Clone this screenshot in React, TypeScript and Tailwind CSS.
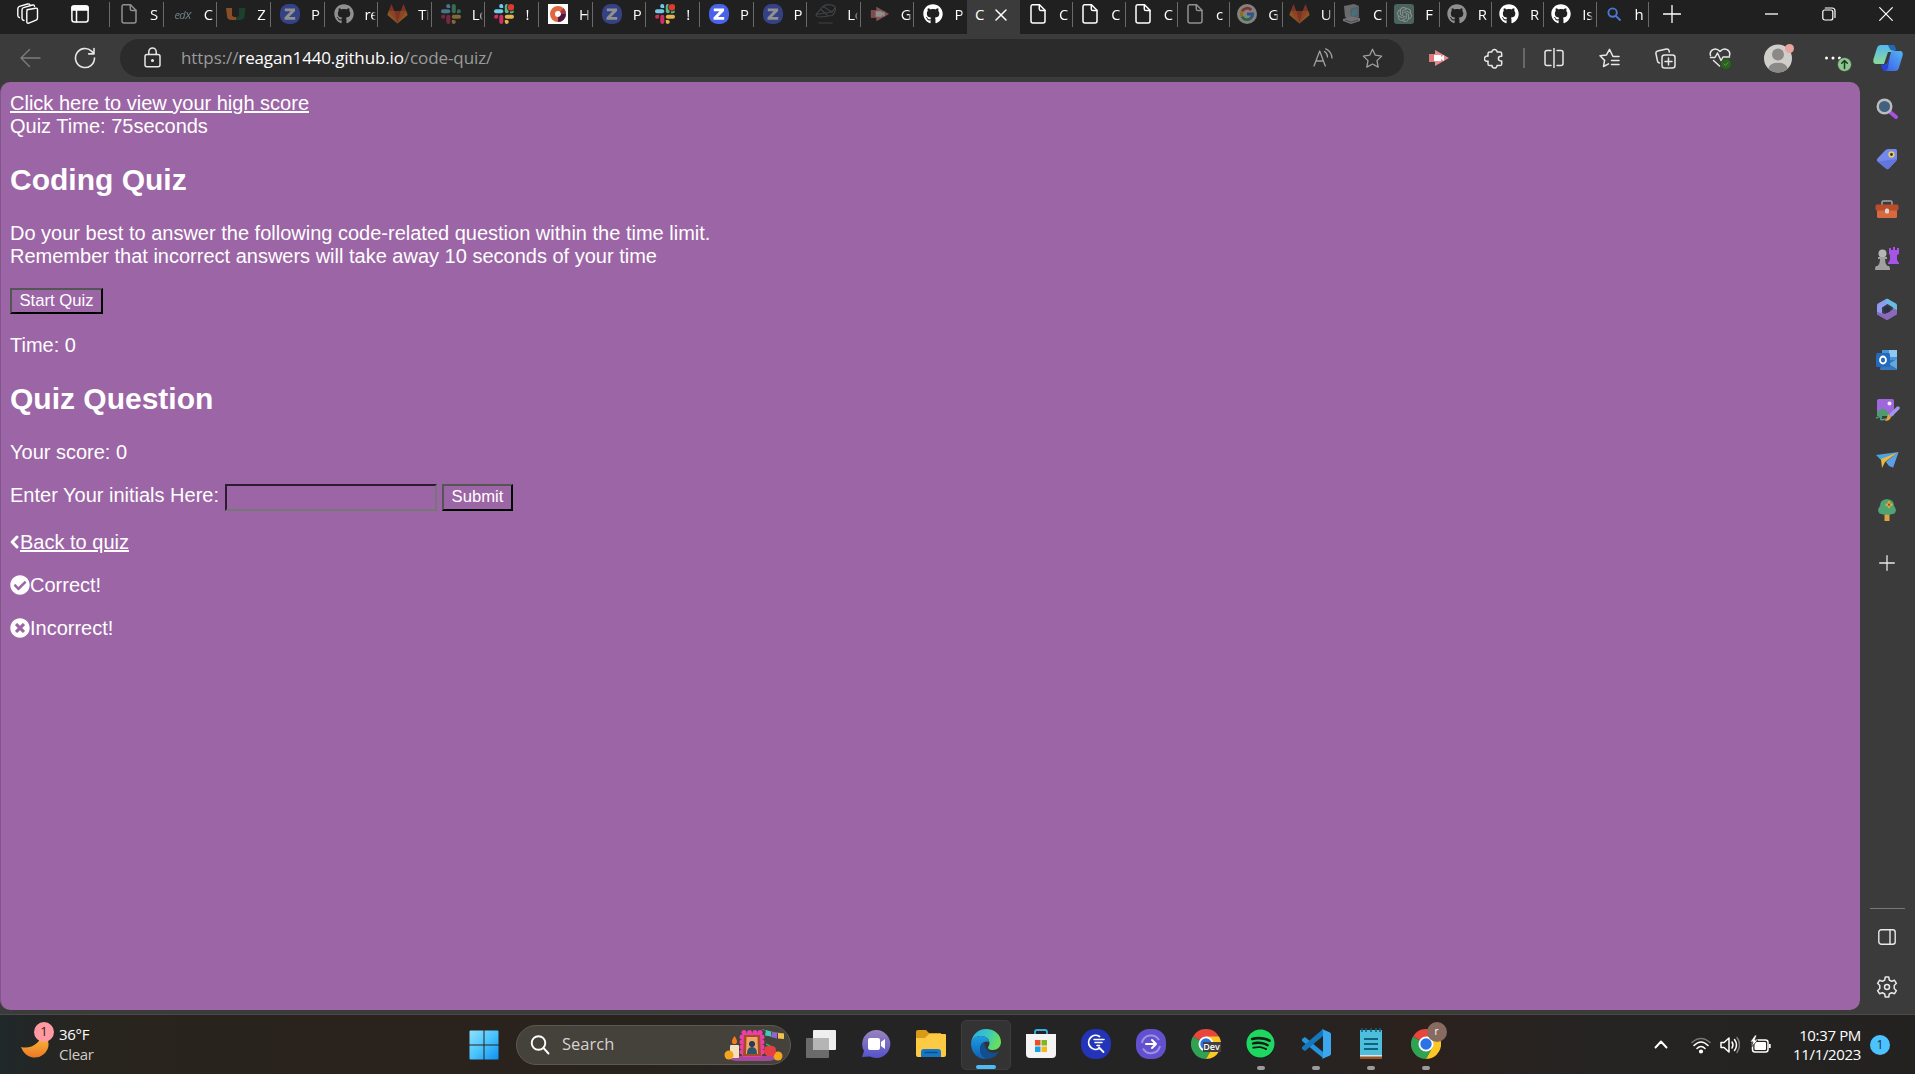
import React from "react";
import { FaCheckCircle, FaGithub, FaSpotify, FaTimesCircle } from "react-icons/fa";
import { SiOpenai } from "react-icons/si";

const line = { fill: "none", stroke: "currentColor", strokeLinecap: "round", strokeLinejoin: "round" } as const;

function FileIcon() {
  return (
    <svg width="20" height="22" viewBox="0 0 20 22" {...line} strokeWidth="1.5">
      <path d="M4.5 1.8H11.5L17 7.3V18a2 2 0 0 1-2 2H5a2 2 0 0 1-2-2V3.4a1.6 1.6 0 0 1 1.5-1.6Z" />
      <path d="M11.3 2v4a1.6 1.6 0 0 0 1.6 1.6h4" />
    </svg>
  );
}

function ZIcon() {
  return (
    <svg width="20" height="20" viewBox="0 0 20 20">
      <rect width="20" height="20" rx="8.5" fill="#4a62ea" />
      <path d="M4.8 4.500H15V7L9 13H15.200V15.800H4.500V13.400L10.500 7.300H4.800Z" fill="#fff" />
    </svg>
  );
}

function SlackIcon({ dot = false }: { dot?: boolean }) {
  return (
    <svg width="20" height="20" viewBox="0 0 20 20">
      <g fill="#6fcbee"><rect x="0" y="5.3" width="9.2" height="4" rx="2" /><path d="M9.2 4.1H7.3a2 2 0 1 1 1.9-2Z" /></g>
      <g fill="#51b98a"><rect x="10.8" y="0" width="4" height="9.2" rx="2" /><path d="M15.9 9.2V7.3a2 2 0 1 1 2 1.9Z" /></g>
      <g fill="#e6b34a"><rect x="10.8" y="10.8" width="9.2" height="4" rx="2" /><path d="M10.8 15.9h1.9a2 2 0 1 1-1.9 2Z" /></g>
      <g fill="#d02f62"><rect x="5.3" y="10.8" width="4" height="9.2" rx="2" /><path d="M4.1 10.8v1.9a2 2 0 1 1-2-1.9Z" /></g>
      {dot && <circle cx="17" cy="3.3" r="3.8" fill="#df3a2c" stroke="#202020" strokeWidth=".8" />}
    </svg>
  );
}

function GoogleIcon() {
  return (
    <svg width="20" height="20" viewBox="0 0 20 20">
      <circle cx="10" cy="10" r="10" fill="#e4e4e4" />
      <g fill="none" strokeWidth="2.8">
        <path d="M14.2 6A5.7 5.7 0 0 0 5 7.3" stroke="#ea4335" />
        <path d="M5 7.3a5.7 5.7 0 0 0 0 5.4" stroke="#fbbc05" />
        <path d="M5 12.7a5.7 5.7 0 0 0 8.6 1.7" stroke="#34a853" />
        <path d="M10 10h5.7a5.7 5.7 0 0 1-2.1 4.4" stroke="#4285f4" />
      </g>
    </svg>
  );
}

function ArrowCam() {
  return (
    <svg width="22" height="18" viewBox="0 0 22 18">
      <path d="M1 5h6V1l14 8-14 8v-4H1Z" fill="#e98a8c" />
      <path d="M6 6h7v2l3-2v6l-3-2v2H6Z" fill="#fff" />
      <path d="M1 5h5v8H1Z" fill="#d9797c" />
    </svg>
  );
}

function GitlabFox() {
  return (
    <svg className="shrink-0" width="21" height="20" viewBox="0 0 21 20">
      <path d="M4.500 0 1.700 7h5.600Zm12 0 2.800 7h-5.600Z" fill="#d9452a" />
      <path d="M1.700 7 .3 11l10.200 8.500L20.700 11 19.300 7Z" fill="#f98a2c" />
      <path d="M1.700 7h5.600l3.200 12.500Zm17.600 0h-5.600l-3.200 12.500Z" fill="#f26a2b" />
      <path d="M7.300 7h6.400l-3.200 12.500Z" fill="#d9452a" />
    </svg>
  );
}

function Statue() {
  return (
    <svg width="20" height="20" viewBox="0 0 20 20">
      <path d="M2 2 12 0l5 2v11l-8 3-6-3Z" fill="#b1b3b8" />
      <path d="M8 5 17 2v10l-8 3Z" fill="#8f9dab" />
      <path d="m10 6.500 5-1.700v6L10 12.500Z" fill="#65c2de" />
      <path d="m1 15 8-2.500 9 1.500v3l-9 3-8-3Z" fill="#c4c4c8" />
      <path d="m3 16 6 2 7-2" stroke="#77777b" fill="none" />
    </svg>
  );
}

type TabData = { icon: React.ReactNode; text: string; dim?: boolean };

const leftTabs: TabData[] = [
  { icon: <FileIcon />, text: "S", dim: true },
  { icon: <span className="font-['Open_Sans'] text-[11px] italic leading-none tracking-[-0.6px] text-[#b6dce4]">ed<b className="text-[13px] font-medium">x</b></span>, text: "C", dim: true },
  {
    icon: (
      <svg width="20" height="14" viewBox="0 0 20 14">
        <path d="M0 1h6v7q0 2 4 2v3H6Q1 13 1 9Z" fill="#f47b2c" />
        <path d="M19.500 1H13v7q0 2-3 2v3h4q4.500 0 4.500-4Z" fill="#17603a" />
      </svg>
    ),
    text: "Z",
    dim: true,
  },
  { icon: <ZIcon />, text: "P", dim: true },
  { icon: <FaGithub size={20} />, text: "re", dim: true },
  { icon: <GitlabFox />, text: "Ti", dim: true },
  { icon: <SlackIcon />, text: "Lo", dim: true },
  { icon: <SlackIcon dot />, text: "!" },
  {
    icon: (
      <svg width="20" height="20" viewBox="0 0 20 20">
        <rect width="20" height="20" fill="#fff" />
        <circle cx="10" cy="10" r="5.5" fill="none" stroke="#e0673f" strokeWidth="5" />
        <path d="M15.5 10a5.5 5.5 0 0 1-5.5 5.5" fill="none" stroke="#4b1942" strokeWidth="5" />
        <path d="M13.9 6.1A5.5 5.5 0 0 1 15.5 10" fill="none" stroke="#a23a45" strokeWidth="5" />
      </svg>
    ),
    text: "H",
  },
  { icon: <ZIcon />, text: "P", dim: true },
  { icon: <SlackIcon dot />, text: "!" },
  { icon: <ZIcon />, text: "P" },
  { icon: <ZIcon />, text: "P", dim: true },
  {
    icon: (
      <svg className="shrink-0" width="22" height="20" viewBox="0 0 22 20" fill="none" stroke="#5f676e" strokeWidth="1.1">
        <path d="M1 10.500 8 2.500Q10 .5 14 .6q6 .4 6.500 3.400 0 5-3.500 7.500L6 13Q1 13 1 10.500Zm0 0 15.500-2.500M8 2.500l9 5.500 3-4M6 5.500 13 12M3.500 19h14" />
      </svg>
    ),
    text: "Lo",
    dim: true,
  },
  { icon: <ArrowCam />, text: "G", dim: true },
  { icon: <FaGithub size={20} />, text: "P" },
];

const rightTabs: TabData[] = [
  { icon: <FileIcon />, text: "C" },
  { icon: <FileIcon />, text: "C" },
  { icon: <FileIcon />, text: "C" },
  { icon: <FileIcon />, text: "c", dim: true },
  { icon: <GoogleIcon />, text: "G", dim: true },
  { icon: <GitlabFox />, text: "U", dim: true },
  { icon: <Statue />, text: "C", dim: true },
  {
    icon: <span className="flex size-5 items-center justify-center rounded-[3px] bg-[#75a99c]"><SiOpenai size={15} /></span>,
    text: "F",
    dim: true,
  },
  { icon: <FaGithub size={20} />, text: "R", dim: true },
  { icon: <FaGithub size={20} />, text: "R" },
  { icon: <FaGithub size={20} />, text: "Is" },
  {
    icon: (
      <svg width="20" height="20" viewBox="0 0 20 20" {...line} stroke="#4a78d6" strokeWidth="1.9">
        <circle cx="8.6" cy="8.6" r="4.2" /><path d="m11.8 11.8 4.2 4.2" />
      </svg>
    ),
    text: "h",
  },
];

function Tab({ tab, divider, iconClass }: { tab: TabData; divider: boolean; iconClass: string }) {
  return (
    <div className="flex h-7 flex-1 items-center">
      <div className={divider ? "mt-px h-[25px] w-px bg-[#6a6a6a]" : "w-px"} />
      <div className={tab.dim ? `${iconClass} opacity-50` : iconClass}>{tab.icon}</div>
      <div className="w-[11px] overflow-hidden whitespace-nowrap text-[15px] leading-5 tracking-[-0.3px] [mask-image:linear-gradient(to_right,black_65%,transparent)]">{tab.text}</div>
    </div>
  );
}

function TabStrip() {
  return (
    <div className="flex h-[34px] shrink-0 bg-[#202020]">
      <div className="flex h-7 w-[109px] shrink-0 items-center">
        <svg className="ml-4" width="23" height="22" viewBox="0 0 23 22" {...line} strokeWidth="1.4">
          <path d="M11 6.800 19.500 5.200q2-.4 2 1.400v8.500q0 1.500-1.400 2l-7.300 3q-2 .6-2-1.400V8.500q0-1.400 1.400-1.800" />
          <path d="M8 17.5q-2-.3-2-2V7q0-1.8 1.6-2.3L16.5 2q1.8-.4 2 1.3" />
          <path d="M3.4 14.5q-1.6-.3-1.6-2V6q0-2 1.6-2.6L11.6 1q1.6-.4 2.3.6" />
        </svg>
        <svg className="ml-8" width="18" height="18" viewBox="0 0 18 18" {...line} strokeWidth="1.5">
          <rect x=".9" y=".9" width="16.2" height="16.2" rx="2.5" />
          <path d="M1 2.5Q1 1 3 1h12q2 0 2 1.500V5H1Z" fill="currentColor" /><path d="M5.500 5v12" />
        </svg>
      </div>
      <div className="flex w-[858px] shrink-0">
        {leftTabs.map((t, i) => <Tab key={i} tab={t} divider iconClass="ml-[9px] mr-[11px] flex w-5 shrink-0 justify-center" />)}
      </div>
      <div className="flex w-[53px] shrink-0 items-center bg-[#3b3b3b] pb-1.5">
        <span className="ml-2 w-[10px] overflow-hidden text-[15px] leading-5">C</span>
        <svg className="ml-[10px] mt-px" width="12" height="12" viewBox="0 0 12 12" {...line} strokeWidth="1.5"><path d="m1 1 10 10M11 1 1 11" /></svg>
      </div>
      <div className="flex w-[628px] shrink-0">
        {rightTabs.map((t, i) => <Tab key={i} tab={t} divider={i > 0} iconClass="ml-[7px] mr-[11px] flex w-5 shrink-0 justify-center" />)}
      </div>
      <div className="flex h-7 flex-1 items-center">
        <div className="mt-px h-[25px] w-px bg-[#6a6a6a]" />
        <svg className="ml-[14px]" width="18" height="18" viewBox="0 0 18 18" {...line} strokeWidth="1.3"><path d="M9 .5v17M.5 9h17" /></svg>
        <svg className="ml-[84px]" width="13" height="2" viewBox="0 0 13 2"><path d="M0 1h13" stroke="#fff" strokeWidth="1.300" /></svg>
        <svg className="ml-[44px]" width="14" height="14" viewBox="0 0 14 14" {...line} strokeWidth="1.2">
          <rect x=".8" y="3" width="10" height="10" rx="2" /><path d="M3.300 1h6.700a3 3 0 0 1 3 3v6.500" />
        </svg>
        <svg className="ml-[43px]" width="14" height="14" viewBox="0 0 14 14" {...line} strokeWidth="1.200"><path d="m.7.7 12.600 12.600M13.300.7.7 13.300" /></svg>
      </div>
    </div>
  );
}

function Toolbar() {
  return (
    <div className="flex h-12 shrink-0 items-center bg-[#3b3b3b] text-[#e6e6e6]">
      <div className="flex w-[60px] justify-center text-[#7d7d7d]">
        <svg width="21" height="20" viewBox="0 0 21 20" {...line} strokeWidth="1.400"><path d="M20 10H1M9.500 1.500 1 10l8.500 8.500" /></svg>
      </div>
      <div className="flex w-[50px] justify-center">
        <svg width="22" height="22" viewBox="0 0 22 22" {...line} strokeWidth="1.600"><path d="M20.500 11a9.500 9.500 0 1 1-3-6.900L20 6.700M20 1.500v5.400h-5.300" /></svg>
      </div>
      <div className="ml-2.5 flex h-[38px] w-[1284px] items-center rounded-full bg-[#2b2b2b]">
        <svg className="mb-px ml-6" width="17" height="21" viewBox="0 0 17 21" {...line} strokeWidth="1.500">
          <rect x="1" y="7.500" width="15" height="12.300" rx="2" /><path d="M4.800 7.500V4.700a3.700 3.700 0 0 1 7.400 0v2.800" /><circle cx="8.500" cy="13.500" r=".8" fill="currentColor" />
        </svg>
        <div className="ml-[20px] whitespace-nowrap text-[17px] tracking-[-0.08px] text-[#9b9b9b]">
          https://<span className="tracking-[-0.14px] text-white">reagan1440.github.io</span>/code-quiz/
        </div>
        <div className="ml-auto flex items-center text-[#a0a0a0]">
          <svg width="20" height="20" viewBox="0 0 20 20" {...line} strokeWidth="1.300">
            <path d="m1 18 5.700-15L12.300 18M3 13h7.500M11.500 3.500q3 2 3 5.500M12.800.8q6 3 6.200 9.200" />
          </svg>
          <svg className="ml-[29px] mr-[21px]" width="21" height="21" viewBox="0 0 21 21" {...line} strokeWidth="1.300">
            <path d="m10.500 1.300 2.800 5.900 6.400.9-4.700 4.500 1.200 6.500-5.700-3.100-5.700 3.100L6 12.600 1.300 8.100l6.400-.9Z" />
          </svg>
        </div>
      </div>
      <div className="ml-[7px] flex w-[56px] justify-center"><ArrowCam /></div>
      <div className="flex w-[54px] justify-center">
        <svg width="20" height="21" viewBox="0 0 20 21" {...line} strokeWidth="1.500">
          <path d="M5.700 4h2.200a2.600 2.600 0 1 1 5.200 0H16q1.700 0 1.700 1.700v2.600h-1a2.300 2.300 0 0 0 0 4.600h1v3q0 1.700-1.700 1.700h-3a2.500 2.500 0 0 1-5 0H5.700Q4 17.600 4 15.900v-2.800a2.600 2.600 0 1 1 0-4.800V5.700Q4 4 5.700 4" />
        </svg>
      </div>
      <div className="flex w-1.5 justify-center"><div className="h-5 w-[1.500px] bg-[#686868]" /></div>
      <div className="flex w-[54px] justify-center">
        <svg width="20" height="20" viewBox="0 0 20 20" {...line} strokeWidth="1.500">
          <path d="M7 2.500H3q-2 0-2 2v11q0 2 2 2h4M13 2.500h4q2 0 2 2v11q0 2-2 2h-4M10 .5v19" />
        </svg>
      </div>
      <div className="flex w-[57px] justify-center">
        <svg width="21" height="20" viewBox="0 0 21 20" {...line} strokeWidth="1.500">
          <path d="M20 8.500h-6L10.500 1.300l-3 5.600L1 7.800l4.600 4.600L4.500 18.500l5-2.600M12.500 12.500H20M12.500 16.500H20" />
        </svg>
      </div>
      <div className="flex w-[54px] justify-center">
        <svg width="21" height="21" viewBox="0 0 21 21" {...line} strokeWidth="1.500">
          <rect x="7" y="7" width="13" height="13" rx="2.500" /><path d="M13.500 10v7M10 13.500h7M4.500 15q-1.800-.3-2-1.800L.9 5.500q-.2-2 1.700-2.400L11.500 1q2-.3 2.500 1.500l.3 1.500" />
        </svg>
      </div>
      <div className="flex w-[56px] justify-center">
        <svg width="22" height="22" viewBox="0 0 22 22" {...line} strokeWidth="1.500">
          <path d="M1.500 8.500C0 3 6.500-.5 11 4.500 15.500-.5 22 3 20.500 8.500M1.500 10.500H6L8.500 6l3.500 7.500 2-3.500h6.500M4.500 13.500 10.500 19" />
          <circle cx="17" cy="17" r="5" fill="#28651b" stroke="none" /><path d="m15 17 1.500 1.500 2.500-3" stroke="#5b9449" strokeWidth="1" />
        </svg>
      </div>
      <div className="flex w-[60px] justify-center">
        <svg className="ml-0.5" width="32" height="30" viewBox="0 0 32 30">
          <circle cx="15" cy="15.500" r="14" fill="#d0cecb" /><circle cx="15" cy="11.500" r="6" fill="#8b8987" />
          <path d="M5.300 25.500q1.500-5.800 9.700-5.800t9.700 5.800a14 14 0 0 1-19.400 0Z" fill="#8b8987" />
          <circle cx="26.500" cy="5.500" r="4.500" fill="#e8a5a0" />
        </svg>
      </div>
      <div className="flex w-[52px] justify-center">
        <svg className="ml-2 mt-1.5" width="28" height="22" viewBox="0 0 28 22">
          <g fill="#fff"><circle cx="2.500" cy="8" r="1.500" /><circle cx="9" cy="8" r="1.500" /><circle cx="15.500" cy="8" r="1.500" /></g>
          <circle cx="20.500" cy="14.500" r="7" fill="#8ec68f" stroke="#3b3b3b" strokeWidth=".8" /><path d="M20.500 18.500v-8m-2.800 2.800 2.800-2.800 2.800 2.800" {...line} stroke="#1d3b20" strokeWidth="1.500" />
        </svg>
      </div>
      <div className="flex w-[55px] justify-center">
        <svg width="30" height="28" viewBox="0 0 30 28">
          <defs>
            <linearGradient id="cpl" x1="0" y1="0" x2="0" y2="1"><stop stopColor="#55b8f0" /><stop offset=".9" stopColor="#86d79f" /></linearGradient>
            <linearGradient id="cpr" x1="1" y1="0" x2="0" y2="1"><stop stopColor="#54b4f8" /><stop offset="1" stopColor="#3d59e0" /></linearGradient>
          </defs>
          <path d="M8 1h11q3 0 3 4l-1.500 3H15l-4 12H3q-3.500 0-2.500-5L4 4q1-3 4-3Z" fill="url(#cpl)" />
          <path d="M15 1h5q2.500 0 3.200 5.500h-4Q17 6.500 15 1Z" fill="#2268b4" />
          <path d="M20 7h7q3.500 0 2.500 5L26 23.500q-1 3.500-4 3.500h-9q-3.500 0-4-6h3q2 0 3-3l2.500-8Q18 7 20 7Z" fill="url(#cpr)" />
          <path d="M8 20.500h6l3-9-2 12q-1 3.500-3 3.500-3 0-4-6.500Z" fill="#2745d5" />
        </svg>
      </div>
    </div>
  );
}

function QuizPage() {
  return (
    <main className="h-[928px] w-[1860px] shrink-0 rounded-[10px] border-l border-[#82568b] bg-[#9c65a5] pl-[9px] pt-2.5 font-['Liberation_Sans',Arial,sans-serif] text-[20px] leading-[23px] text-white">
      <a className="block w-fit underline">Click here to view your high score</a>
      <p>Quiz Time: 75seconds</p>
      <h2 className="my-[25px] text-[30px] font-bold leading-[34px]">Coding Quiz</h2>
      <p>Do your best to answer the following code-related question within the time limit.<br />Remember that incorrect answers will take away 10 seconds of your time</p>
      <button className="mt-5 block h-[26px] w-[93px] border-2 border-b-black border-l-[#555] border-r-black border-t-[#555] text-[16.67px] leading-[20px]">Start Quiz</button>
      <p className="mt-5">Time: 0</p>
      <h2 className="my-[25px] text-[30px] font-bold leading-[34px]">Quiz Question</h2>
      <p>Your score: 0</p>
      <div className="mt-5 flex h-[27px]">
        <label>Enter Your initials Here:</label>
        <input className="ml-[6px] h-[27px] w-[212px] border-2 border-b-[#767676] border-l-[#2c1c2f] border-r-[#767676] border-t-[#2c1c2f] bg-transparent outline-none" />
        <button className="ml-[5px] h-[27px] w-[71px] border-2 border-b-black border-l-[#555] border-r-black border-t-[#555] pb-0.5 text-[16.67px] leading-[20px]">Submit</button>
      </div>
      <p className="mt-5 flex items-center"><svg className="mb-px mr-px" width="9" height="16" viewBox="0 0 9 16"><path d="M7 3 2.200 8 7 13" fill="none" stroke="#fff" strokeWidth="3" strokeLinecap="round" strokeLinejoin="round" /></svg><a className="underline">Back to quiz</a></p>
      <p className="mt-5 flex items-center"><FaCheckCircle className="mb-0.5" size={20} />Correct!</p>
      <p className="mt-5 flex items-center"><FaTimesCircle className="mb-0.5" size={20} />Incorrect!</p>
    </main>
  );
}

const sideIcons: React.ReactNode[] = [
  <svg width="22" height="22" viewBox="0 0 22 22"><path d="m14 14 6 5" stroke="#a950dd" strokeWidth="4" strokeLinecap="round" /><circle cx="8.500" cy="8.500" r="6.800" fill="#42617f" stroke="#bcbcbc" strokeWidth="2.400" /></svg>,
  <svg width="22" height="22" viewBox="0 0 22 22"><path d="M12 1h7.500Q21 1 21 3v8q0 1-1 2l-7 7.500q-1.500 1.500-3 0L1.500 13.500q-1.500-1.500 0-3L9 2.500Q10.500 1 12 1Z" fill="#7589ed" /><path d="M1.500 13.500 10 20.500q1.500 1.500 3 0L20 13l1-2z" fill="#6376dd" /><circle cx="15.500" cy="6.500" r="2.300" fill="#2c3047" stroke="#e8cd65" strokeWidth="1.700" /></svg>,
  <svg width="24" height="20" viewBox="0 0 24 20"><path d="M7 6V3.500Q7 2 8.500 2h7Q17 2 17 3.500V6" fill="none" stroke="#a2a6a6" strokeWidth="1.500" /><rect x="2" y="9" width="20" height="10" rx="1.500" fill="#d76940" /><rect x=".5" y="5.500" width="23" height="6" rx="1.500" fill="#b94d2b" /><rect x="10" y="9.500" width="4" height="5" rx="1.500" fill="#dad5d0" /></svg>,
  <svg width="24" height="24" viewBox="0 0 24 24"><path d="M14 1h2v2h2V0h2v3h2V1h2v6l-2 1v5l2 3v1H13v-1l2-3V8l-1-1Z" fill="#a653e8" /><circle cx="7.500" cy="6.500" r="4" fill="#b5b5b5" /><path d="M3 10h9v2h-2q0 5 2.500 7H14q1 1 1 4H0q0-3 1-4h1.500Q5 17 5 12H3Z" fill="#a0a0a0" /></svg>,
  <svg width="22" height="23" viewBox="0 0 22 23"><path d="M12 1q-1-.5-2 0L2 5.500Q1 6 1 7.500V16l6 3.500 1.500-2.500L6 15V9.500L13 5V1.500Z" fill="#8d9bf0" /><path d="M12 1 20 5.500q1 .5 1 2V15l-4-3V9.500L10 5V1.500q1-1 2-.5Z" fill="#69bbe2" /><path d="M21 12v3.500q0 1-1 1.600l-8 4.600q-1 .6-2 0L1 16.500 1 14l8 2 7-4 1-2Z" fill="#8a69bb" /><path d="M8 10 11 8l3 2v3.500L11 15l-3-1.500Z" fill="#2c3050" /></svg>,
  <svg width="22" height="22" viewBox="0 0 22 22"><rect x="6" y="1" width="15" height="18" fill="#4694dc" /><path d="M13 1h8v7h-8Z" fill="#90c9f0" /><path d="M6 11h15v10H4Z" fill="#3578bc" /><path d="m21 10-8 5 8 5Z" fill="#63a9e0" /><rect y="4" width="14" height="14" rx="1.500" fill="#2569bd" /><ellipse cx="7" cy="11" rx="3" ry="3.500" fill="none" stroke="#fff" strokeWidth="1.800" /></svg>,
  <svg width="25" height="24" viewBox="0 0 25 24"><rect x="2" y="1" width="17" height="17" rx="2" fill="#a067dd" /><path d="m2 14 6-4 8 7-2 1H2Z" fill="#4e9b70" /><circle cx="14.500" cy="5.500" r="2" fill="#eee" /><path d="m16 17 7-7" stroke="#a197ed" strokeWidth="3.500" strokeLinecap="round" /><path d="m13 16 3 3q-1 4-6 4 2-2 3-7Z" fill="#dfa73c" /><path d="M1 20q7-3 5 0t5 1" fill="none" stroke="#4ba57b" strokeWidth="1.500" /></svg>,
  <svg width="23" height="18" viewBox="0 0 23 18"><path d="M0 4 22.500 1 6 10Z" fill="#4ba2e4" /><path d="M22.500 1 17 16.500 10 11Z" fill="#478fdc" /><path d="M22.500 1 5 8l1 9 3-6Z" fill="#e8b93f" /><path d="m10 11 3 4 4 1.500L22.500 1Z" fill="#5d9ee8" /></svg>,
  <svg width="20" height="24" viewBox="0 0 20 24"><path d="M7.500 15h5v8h-5Z" fill="#e0a23f" /><path d="M10 1Q3 1.500 3 8q-3.500 4-.5 7.500 7.500 2.500 15 0 3-3.500-.5-7.500 0-6.500-7-7Z" fill="#4fa374" /><path d="M12 4.300v4.800M9.600 6.700h4.800" stroke="#e0a83b" strokeWidth="2.500" strokeLinecap="round" /><circle cx="12" cy="6.700" r="1.100" fill="#8b4b20" /></svg>,
];

function Sidebar() {
  return (
    <aside className="flex flex-1 flex-col items-center pr-px pt-[1.500px] text-[#e8e8e8]">
      {sideIcons.map((icon, i) => <div key={i} className="flex h-[50.200px] items-center justify-center">{icon}</div>)}
      <svg className="mt-5 shrink-0" width="16" height="16" viewBox="0 0 16 16" {...line} strokeWidth="1.300"><path d="M8 .7v14.600M.7 8h14.600" /></svg>
      <div className="mt-auto h-px w-[35px] shrink-0 bg-[#777]" />
      <svg className="mt-5 shrink-0" width="18" height="16" viewBox="0 0 18 16" {...line} strokeWidth="1.400"><rect x=".8" y=".8" width="16.400" height="14.400" rx="2.500" /><path d="M12 1v14" /></svg>
      <svg className="mb-4 mt-[31px] shrink-0" width="22" height="22" viewBox="0 0 22 22" {...line} strokeWidth="1.500">
        <path d="M9.300 1h3.400l.6 3 2.300 1.300 2.900-1 1.900 3-2.200 2.200v3l2.200 2.200-1.900 3-2.900-1-2.300 1.300-.6 3H9.300l-.6-3-2.300-1.300-2.900 1-1.900-3 2.200-2.200v-3L1.600 7.300l1.900-3 2.900 1L8.700 4Z" /><circle cx="11" cy="11" r="2.500" />
      </svg>
    </aside>
  );
}

function Chrome() {
  return (
    <svg width="30" height="30" viewBox="0 0 30 30">
      <path d="M15 15 2 7.500a15 15 0 0 1 26 0Z" fill="#e8453c" />
      <path d="M15 15 2 7.500A15 15 0 0 0 15 30l6.500-11.500Z" fill="#2fa352" />
      <path d="M15 7.500h13A15 15 0 0 1 15 30l6.500-11.500Z" fill="#fbc724" />
      <circle cx="15" cy="15" r="7.500" fill="#fff" /><circle cx="15" cy="15" r="5.700" fill="#2b72e6" />
    </svg>
  );
}

function Altar() {
  return (
    <svg width="62" height="32" viewBox="0 0 62 32">
      <path d="M4 27h50q-3 5-10 5H13q-7 0-9-5Z" fill="#a34a9c" />
      <g fill="#e83fa8">
        <rect x="18" y="4" width="20" height="24" rx="2" />
        {[20, 25.500, 31, 36].map((x) => <circle key={x} cx={x} cy="3.500" r="2.500" />)}
        {[8, 13, 18, 23].map((y) => <g key={y}><circle cx="18" cy={y} r="2.500" /><circle cx="38" cy={y} r="2.500" /></g>)}
      </g>
      <path d="M20 6h16l1 21H19Z" fill="#a84a23" /><path d="M22.500 8h11l.5 17H22Z" fill="#f0a56a" />
      <circle cx="28" cy="15" r="3" fill="#243d4e" /><path d="M23 25q0-7 5-7t5 7Z" fill="#2d536c" />
      <rect x="6" y="16" width="9" height="13" rx="1" fill="#f3e0bd" /><path d="M10.500 7q4 5 1.500 8h-3q-3-2 1.500-8Z" fill="#f47a1c" />
      <circle cx="5" cy="26" r="4.500" fill="#f5a51d" /><circle cx="54" cy="27" r="4.500" fill="#f5a51d" />
      <path d="M41 18q5-3 10 0 3 5-2 9h-6q-5-4-2-9Z" fill="#e33f45" /><path d="m46 17-4-2" stroke="#3da852" strokeWidth="1.500" />
      <path d="m38 0 4 2 18 3" stroke="#67757b" fill="none" /><path d="m42 1 5 1.500v5L41 6.500Z" fill="#45cbb2" /><path d="m48 3 5 1v5.500l-6-1.500Z" fill="#8f65d4" /><path d="m54 4 6 .5V10l-6-.5Z" fill="#f3c04b" />
    </svg>
  );
}

const apps: { icon: React.ReactNode; running?: boolean; active?: boolean }[] = [
  { icon: <svg width="30" height="28" viewBox="0 0 30 28"><rect y="8" width="23" height="20" rx="1" fill="#6b6b6b" /><rect x="7" width="23" height="20" rx="1" fill="#efefef" /><path d="M7 8h16v12H7Z" fill="#b5b5b5" /></svg> },
  { icon: <svg width="30" height="30" viewBox="0 0 30 30"><defs><linearGradient id="chat" x2="0" y2="1"><stop stopColor="#9a83bc" /><stop offset="1" stopColor="#5353cc" /></linearGradient></defs><path d="M15 1a14 14 0 1 1-6 26.500L1 28l2-6A14 14 0 0 1 15 1Z" fill="url(#chat)" /><rect x="7" y="9" width="12" height="12" rx="2" fill="#fff" /><path d="m20 13 4-3v10l-4-3Z" fill="#fff" /></svg> },
  { icon: <svg width="30" height="27" viewBox="0 0 30 27"><path d="M0 2Q0 0 2 0h8l3 3h12v8H0Z" fill="#d99b17" /><path d="M0 8h9l4-4h16q1 0 1 1v20q0 2-2 2H2q-2 0-2-2Z" fill="#fcca43" /><path d="M5 27v-5q0-3 3-3h14q3 0 3 3v5Z" fill="#1777c5" /><path d="M9 22.500h12" stroke="#0b4c8c" strokeWidth="1.500" strokeLinecap="round" /></svg> },
  {
    active: true,
    icon: (
      <svg width="30" height="30" viewBox="0 0 30 30">
        <defs>
          <linearGradient id="edg" y2=".3"><stop stopColor="#29abe2" /><stop offset=".55" stopColor="#38c5c9" /><stop offset="1" stopColor="#67df5c" /></linearGradient>
          <linearGradient id="edb" x2="0" y2="1"><stop stopColor="#1e9de2" /><stop offset="1" stopColor="#0f5eb5" /></linearGradient>
        </defs>
        <path d="M0 14C1 6 7 0 15 0c9 0 15 6 15 13 0 5-4 8-8 8-4 0-5-1.500-5-2.500 0-.8 1.500-1.800 1.500-4.500C18.500 10 15 7 10 7 5 7 1 10 0 14Z" fill="url(#edg)" />
        <path d="M0 14C1 10 5 7 10 7c5 0 8 3 8 6-4-2-9 1-9 7 0 5 3 8 7 10C7 31 0 24 0 14Z" fill="url(#edb)" />
        <path d="M16 30c-5-2-7-6-7-10 0-4 2-6 4.500-7-.5 8 6.500 13.500 14.500 9.500-2 4-7 7.500-12 7.500Z" fill="#134f8f" />
      </svg>
    ),
  },
  { icon: <svg width="30" height="30" viewBox="0 0 30 30"><path d="M9 7V3q0-2 2-2h8q2 0 2 2v4" fill="none" stroke="#36b1e0" strokeWidth="1.800" /><path d="M0 5h30v20q0 4-4 4H4q-4 0-4-4Z" fill="#f4f4f4" /><path d="M9 11h5.500v5.500H9Z" fill="#e94e24" /><path d="M15.500 11H21v5.500h-5.500Z" fill="#7cb81e" /><path d="M9 17.500h5.500V23H9Z" fill="#19a2e2" /><path d="M15.500 17.500H21V23h-5.500Z" fill="#f8b71c" /></svg> },
  { icon: <svg width="30" height="30" viewBox="0 0 30 30"><rect width="30" height="30" rx="14" fill="#2434b8" /><g fill="none" stroke="#fff" strokeWidth="1.800" strokeLinecap="round"><path d="M18.500 7.500A7 7 0 1 0 18 19.500M18 18.500l4.500 4.500" /><path d="M13 10.500h10M14 13.500h7M16 16.500h2.500" strokeWidth="1.500" /></g></svg> },
  { icon: <svg width="30" height="30" viewBox="0 0 30 30"><rect width="30" height="30" rx="13" fill="#6250cf" /><path d="M24 17a9.200 9.200 0 0 1-17 2.500M6 14a9.200 9.200 0 0 1 17-3" fill="none" stroke="#9d92e5" strokeWidth="2" /><path d="M10 15h10m-4-4 4 4-4 4" {...line} stroke="#fff" strokeWidth="2" /></svg> },
  { icon: <div className="relative"><Chrome /><span className="absolute left-[12px] top-[13px] h-[10px] w-[18px] bg-[#42413f] text-center text-[9px] font-semibold leading-[10px] text-white">Dev</span></div> },
  { icon: <span className="flex size-7 items-center justify-center rounded-full bg-[#171a17]"><FaSpotify className="shrink-0" size={29} color="#1ed760" /></span>, running: true },
  { icon: <svg width="30" height="30" viewBox="0 0 30 30"><path d="M1 10 4 8l18 15v6L1 12Z" fill="#2494dc" /><path d="M22 0v7L4 22l-3-2v-2Z" fill="#1777bd" /><path d="m21 0 8 3.500q1 .5 1 2v19q0 1.500-1 2L21 30q1-1 1-3V3q0-2-1-3Z" fill="#3aa7ee" /></svg>, running: true },
  { icon: <svg width="24" height="31" viewBox="0 0 24 31"><path d="M1 27h22v4H1Z" fill="#9a5426" /><path d="M1 2h22v25H1Z" fill="#4dbfdc" /><path d="M1 27h22v1.500H1Z" fill="#e3e3e3" /><path d="M5 11h14M5 16h14M5 21h14" stroke="#12627b" strokeWidth="2" /><path d="M3 0v4M7 0v4M12 0v4M17 0v4M21 0v4" stroke="#155d70" strokeWidth="1.500" /></svg>, running: true },
  { icon: <div className="relative"><Chrome /><span className="absolute -top-[7px] left-[16px] flex size-[20px] items-center justify-center rounded-full bg-[#876a60] text-[10px] text-white">r</span></div>, running: true },
];

function Taskbar() {
  return (
    <footer className="flex h-[60px] shrink-0 items-center border-t border-[#4a4a49] bg-[linear-gradient(to_right,#20282a_0px,#28241e_90px,#2a221d_400px,#29231d_640px,#242424_800px,#242424_1250px,#2b211d_1420px,#252423_1600px,#242220_1915px)]">
      <div className="flex h-full w-[456px] shrink-0">
        <div className="relative ml-[21px] mt-2 h-10 w-8">
          <svg className="mt-2.5" width="30" height="30" viewBox="0 0 30 30"><defs><linearGradient id="moon" x2="0" y2="1"><stop stopColor="#f7bf38" /><stop offset="1" stopColor="#ed7826" /></linearGradient></defs><path d="M25 2q6 12-2 19-6 5-13 3Q3 22 0 14q9 2 16-4 4-3 2-8Z" fill="url(#moon)" /></svg>
          <span className="absolute left-[13px] top-[-1px] flex size-5 items-center justify-center rounded-full bg-[#ff9aa2] text-[13px] text-[#332022]">1</span>
        </div>
        <div className="ml-[6px] mt-[9px] text-[15px] leading-5 tracking-[-0.300px]"><div>36°F</div><div className="text-[#cfccc8]">Clear</div></div>
      </div>
      <div className="flex w-[55px] shrink-0 justify-center">
        <svg width="30" height="30" viewBox="0 0 30 30"><defs><linearGradient id="win" x2="1" y2="1"><stop stopColor="#8fe1ff" /><stop offset=".5" stopColor="#4ac4fb" /><stop offset="1" stopColor="#0d90f2" /></linearGradient></defs><path d="M1.500.5h13v14H.5v-13q0-1 1-1Zm14 0h13q1 0 1 1v13h-14ZM.5 15.500h14v14h-13q-1 0-1-1Zm15 0h14v13q0 1-1 1h-13Z" fill="url(#win)" /></svg>
      </div>
      <div className="ml-[5px] flex h-10 w-[275px] shrink-0 items-center rounded-full border border-[#5c5954] bg-[#45413b]">
        <svg className="ml-[13px]" width="20" height="20" viewBox="0 0 20 20" {...line} strokeWidth="1.900"><circle cx="8.500" cy="8" r="6.800" /><path d="m13.500 13 5 5.500" /></svg>
        <span className="ml-[12px] text-[16.500px] text-[#d6d3cf]">Search</span>
        <div className="ml-auto mr-1"><Altar /></div>
      </div>
      <div className="ml-0.5 flex shrink-0">
        {apps.map((a, i) => (
          <div key={i} className="flex h-[58px] w-[55px] items-center justify-center">
            <div className={a.active ? "relative flex size-[50px] items-center justify-center rounded-[5px] border border-[#3d3d3d] bg-[#333] pb-0.5" : "relative flex size-[50px] items-center justify-center pb-0.5"}>
              {a.icon}
              {a.active && <span className="absolute bottom-0 h-1 w-5 rounded-full bg-[#4cbcf5]" />}
              {a.running && <span className="absolute bottom-0 h-1 w-2 rounded-full bg-[#9b9b9b]" />}
            </div>
          </div>
        ))}
      </div>
      <div className="flex flex-1 items-center">
        <svg className="ml-[201px]" width="14" height="9" viewBox="0 0 14 9" {...line} strokeWidth="1.900"><path d="m1.500 7.500 5.500-6 5.500 6" /></svg>
        <svg className="ml-[23px]" width="20" height="18" viewBox="0 0 20 18" {...line} strokeWidth="1.600"><path d="M1 6.500q9-8 18 0" stroke="#777" /><path d="M3 9.500q7-7 14 0M6 12.500q4-4 8 0" /><circle cx="10" cy="15.500" r="1.300" fill="#fff" /></svg>
        <svg className="ml-[9px]" width="20" height="18" viewBox="0 0 20 18" {...line} strokeWidth="1.500"><path d="M1 6.500h3L9 2v14l-5-4.500H1ZM12 6q2 3 0 6M14.500 3.500q4 5.500 0 11" /><path d="M17 1.500q5 7 0 15" stroke="#777" /></svg>
        <svg className="ml-[10px]" width="21" height="20" viewBox="0 0 21 20"><rect x="2.500" y="5" width="15.500" height="12" rx="2.500" fill="none" stroke="#fff" strokeWidth="1.500" /><rect x="4.500" y="7" width="11.500" height="8" rx="1" fill="#fff" /><path d="M19.800 9v4" stroke="#fff" strokeWidth="1.800" /><path d="M5 0 0 7h3l-1.500 5L8 5H5l2-5Z" fill="#fff" stroke="#242424" strokeWidth=".8" /></svg>
        <div className="ml-auto pt-px text-right text-[15px] leading-[19.500px] tracking-[-0.350px]"><div>10:37 PM</div><div>11/1/2023</div></div>
        <span className="ml-[9px] mr-[25px] flex size-5 items-center justify-center rounded-full bg-[#4cc2ff] text-[12px] text-[#16303d]">1</span>
      </div>
    </footer>
  );
}

export default function App() {
  return (
    <div className="flex h-[1074px] w-[1915px] flex-col overflow-hidden bg-[#3b3b3b] font-['Open_Sans','Noto_Sans',sans-serif] text-white">
      <TabStrip />
      <Toolbar />
      <div className="flex h-[932px] shrink-0">
        <QuizPage />
        <Sidebar />
      </div>
      <Taskbar />
    </div>
  );
}
